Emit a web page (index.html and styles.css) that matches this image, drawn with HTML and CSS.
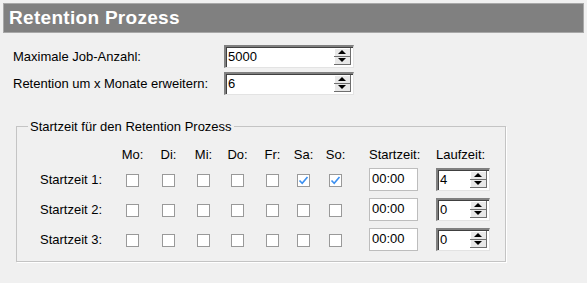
FILE: index.html
```html
<!DOCTYPE html>
<html lang="de">
    <head>
        <meta charset="UTF-8">
        <meta name="viewport" content="width=device-width, initial-scale=1.0">
        <title>Retention Prozess</title>
        <link rel="stylesheet" href="styles.css">
    </head>
    <body>
        <div class="title">Retention Prozess</div>

        <div class="settings">
            <label class="label">Maximale Job-Anzahl:</label>
            <div class="spin spin-wide">
                <span class="spin-value">5000</span>
                <span class="spin-buttons"><span class="up"></span><span class="down"></span></span>
            </div>

            <label class="label">Retention um x Monate erweitern:</label>
            <div class="spin spin-wide">
                <span class="spin-value">6</span>
                <span class="spin-buttons"><span class="up"></span><span class="down"></span></span>
            </div>
        </div>

        <fieldset class="group">
            <legend>Startzeit für den Retention Prozess</legend>
            <div class="schedule">
                <!-- header row -->
                <span></span>
                <span class="day">Mo:</span>
                <span class="day">Di:</span>
                <span class="day">Mi:</span>
                <span class="day">Do:</span>
                <span class="day">Fr:</span>
                <span class="day">Sa:</span>
                <span class="day">So:</span>
                <span class="head">Startzeit:</span>
                <span class="head">Laufzeit:</span>

                <!-- Startzeit 1 -->
                <span class="row-label">Startzeit 1:</span>
                <span class="check"></span>
                <span class="check"></span>
                <span class="check"></span>
                <span class="check"></span>
                <span class="check"></span>
                <span class="check checked"><svg width="11" height="11" viewBox="0 0 11 11"><path d="M1.5 5.5 L4.2 8.3 L9.5 2" fill="none" stroke="#3b8ff0" stroke-width="1.6"/></svg></span>
                <span class="check checked"><svg width="11" height="11" viewBox="0 0 11 11"><path d="M1.5 5.5 L4.2 8.3 L9.5 2" fill="none" stroke="#3b8ff0" stroke-width="1.6"/></svg></span>
                <span class="time">00:00</span>
                <div class="spin spin-small">
                    <span class="spin-value">4</span>
                    <span class="spin-buttons"><span class="up"></span><span class="down"></span></span>
                </div>

                <!-- Startzeit 2 -->
                <span class="row-label">Startzeit 2:</span>
                <span class="check"></span>
                <span class="check"></span>
                <span class="check"></span>
                <span class="check"></span>
                <span class="check"></span>
                <span class="check"></span>
                <span class="check"></span>
                <span class="time">00:00</span>
                <div class="spin spin-small">
                    <span class="spin-value">0</span>
                    <span class="spin-buttons"><span class="up"></span><span class="down"></span></span>
                </div>

                <!-- Startzeit 3 -->
                <span class="row-label">Startzeit 3:</span>
                <span class="check"></span>
                <span class="check"></span>
                <span class="check"></span>
                <span class="check"></span>
                <span class="check"></span>
                <span class="check"></span>
                <span class="check"></span>
                <span class="time">00:00</span>
                <div class="spin spin-small">
                    <span class="spin-value">0</span>
                    <span class="spin-buttons"><span class="up"></span><span class="down"></span></span>
                </div>
            </div>
        </fieldset>
    </body>
</html>
```

FILE: styles.css
```css
body {
    font-family: "Liberation Sans", Arial, sans-serif;
    font-size: 13px;
    color: #000;
    background-color: #f0f0f0;
    margin: 0;
    padding: 3px;
}

.title {
    height: 28px;
    line-height: 28px;
    padding-left: 5px;
    background-color: #808080;
    border: 1px solid #a8a8a8;
    color: #fff;
    font-weight: bold;
    font-size: 19px;
    letter-spacing: 0.3px;
}

.settings {
    display: grid;
    grid-template-columns: 211px 130px;
    row-gap: 4px;
    align-items: center;
    margin-top: 12px;
    padding-left: 10px;
}

.label {
    white-space: nowrap;
}

/* spinner (up/down control) */
.spin {
    display: flex;
    height: 23px;
    box-sizing: border-box;
    background-color: #fff;
    border-top: 2px solid #808080;
    border-left: 2px solid #808080;
    border-right: 1px solid #e3e3e3;
    border-bottom: 1px solid #e3e3e3;
    box-shadow: inset 1px 1px 0 #404040;
}

.spin-wide {
    width: 130px;
}

.spin-small {
    width: 54px;
}

.spin-value {
    flex: 1;
    padding-left: 2px;
    padding-top: 2px;
}

.spin-buttons {
    display: flex;
    flex-direction: column;
    width: 16px;
    margin: 1px 2px 2px 0;
    background-color: #e8e8e8;
    border-right: 1px solid #6e6e6e;
    border-bottom: 1px solid #6e6e6e;
    box-shadow: inset 1px 1px 0 #fff;
}

.spin-buttons .up,
.spin-buttons .down {
    flex: 1;
    display: flex;
    align-items: center;
    justify-content: center;
}

.spin-buttons .up {
    border-bottom: 1px solid #6e6e6e;
}

.spin-buttons .up::after {
    content: "";
    border-left: 4px solid transparent;
    border-right: 4px solid transparent;
    border-bottom: 4px solid #000;
}

.spin-buttons .down::after {
    content: "";
    border-left: 4px solid transparent;
    border-right: 4px solid transparent;
    border-top: 4px solid #000;
}

/* group box */
.group {
    width: 490px;
    height: 143px;
    box-sizing: border-box;
    margin: 24px 0 0 13px;
    padding: 0;
    border: 1px solid #c4c4c4;
    box-shadow: 1px 1px 0 #fff;
}

.group legend {
    margin-left: 11px;
    padding: 0 2px;
}

.schedule {
    display: grid;
    grid-template-columns: 86px 36px 35px 34px 35px 31px 32px 40px 67px 54px;
    grid-template-rows: 14px 23px 23px 23px;
    row-gap: 7px;
    align-items: center;
    margin: 13px 0 0 23px;
}

.day {
    display: flex;
    justify-content: center;
    width: 13px;
    white-space: nowrap;
}

.head {
    white-space: nowrap;
}

.row-label {
    white-space: nowrap;
}

.check {
    display: flex;
    align-items: center;
    justify-content: center;
    width: 13px;
    height: 13px;
    box-sizing: border-box;
    margin-top: 2px;
    background-color: #fff;
    border: 1px solid #999;
}

.time {
    width: 49px;
    height: 23px;
    box-sizing: border-box;
    padding: 2px 0 0 2px;
    background-color: #fff;
    border: 1px solid #bdbdbd;
}
```
